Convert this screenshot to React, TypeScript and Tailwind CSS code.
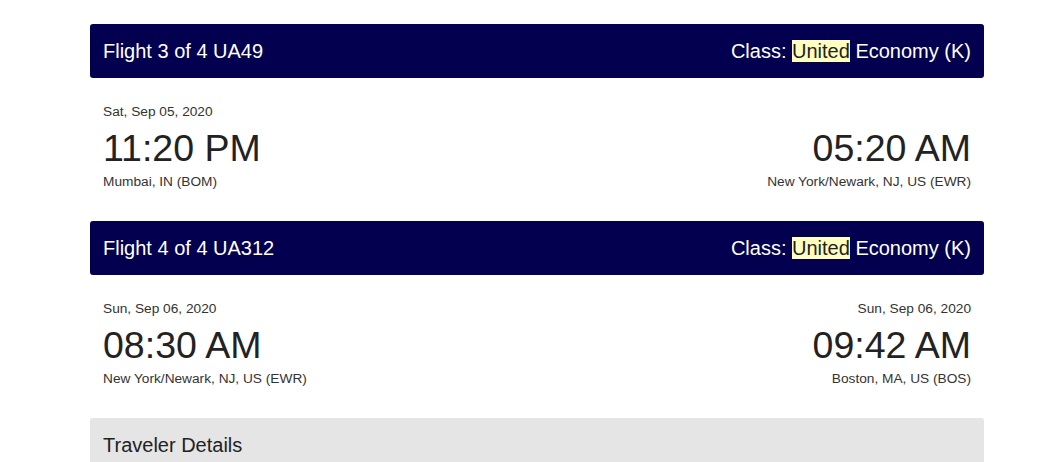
const flights = [
  {
    title: 'Flight 3 of 4 UA49',
    from: { date: 'Sat, Sep 05, 2020', time: '11:20 PM', place: 'Mumbai, IN (BOM)' },
    to: { date: '', time: '05:20 AM', place: 'New York/Newark, NJ, US (EWR)' },
  },
  {
    title: 'Flight 4 of 4 UA312',
    from: { date: 'Sun, Sep 06, 2020', time: '08:30 AM', place: 'New York/Newark, NJ, US (EWR)' },
    to: { date: 'Sun, Sep 06, 2020', time: '09:42 AM', place: 'Boston, MA, US (BOS)' },
  },
]

function Stop({ stop, right }: { stop: any; right?: boolean }) {
  return (
    <div className={`flex flex-col ${right ? 'items-end' : 'items-start'}`}>
      <p className="text-[13.7px] leading-4 h-4 text-[#333]">{stop.date}</p>
      <p className="text-[37.5px] leading-10 mt-2 text-[#222]">{stop.time}</p>
      <p className="text-[13.7px] leading-4 mt-1.5 text-[#333]">{stop.place}</p>
    </div>
  )
}

export default function App() {
  return (
    <div className="min-h-screen bg-white font-['Liberation_Sans',Arial,sans-serif]">
      <main className="w-[894px] ml-[90px] pt-6">
        {flights.map((f) => (
          <section key={f.title}>
            <header className="h-[54px] bg-[#030050] rounded-[3px] px-[13px] flex items-center justify-between text-white text-[20px]">
              <span>{f.title}</span>
              <span>
                Class: <span className="bg-[#ffffc0] text-[#222]">United</span> Economy (K)
              </span>
            </header>
            <div className="px-[13px] pt-[26px] pb-[31px] flex justify-between">
              <Stop stop={f.from} />
              <Stop stop={f.to} right />
            </div>
          </section>
        ))}

        <div className="bg-[#e5e5e5] rounded-t-[3px] h-[60px] px-[13px] pt-[15px]">
          <h2 className="text-[20px] leading-6 text-[#222]">Traveler Details</h2>
        </div>
      </main>
    </div>
  )
}
